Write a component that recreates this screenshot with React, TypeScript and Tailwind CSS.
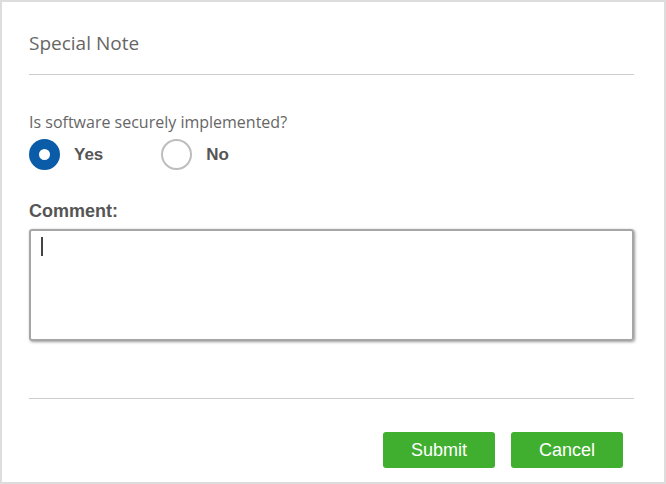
import React, { useState } from 'react';

function Radio({ checked, label, onClick }: { checked: boolean; label: string; onClick: () => void }) {
    return (
        <button type="button" onClick={onClick} className="flex items-center">
            {checked ? (
                <span className="block w-[31px] h-[31px] rounded-full border-[10px] border-[#0b5ca8] bg-white" />
            ) : (
                <span className="block w-[31px] h-[31px] rounded-full border-2 border-[#bdbdbd] bg-white" />
            )}
            <span className="ml-[14px] font-['Liberation_Sans',Arial,sans-serif] font-bold text-[17px] leading-5 text-[#555]">
                {label}
            </span>
        </button>
    );
}

export default function App() {
    const [secure, setSecure] = useState(true);

    return (
        <div className="w-[666px] h-[484px] bg-white border-2 border-[#dddddd] pl-[27px] pr-[30px] font-['Open_Sans',sans-serif]">
            {/* Header */}
            <div className="pt-[29px] pb-[19px] border-b border-[#cccccc]">
                <h2 className="text-[19px] leading-6 text-[#666]">Special Note</h2>
            </div>

            <p className="mt-[37px] text-[16px] leading-5 text-[#666]">Is software securely implemented?</p>
            <div className="mt-[7px] flex gap-[58px]">
                <Radio checked={secure} label="Yes" onClick={() => setSecure(true)} />
                <Radio checked={!secure} label="No" onClick={() => setSecure(false)} />
            </div>

            <label className="block mt-[31px] font-['Liberation_Sans',Arial,sans-serif] font-bold text-[18px] leading-5 text-[#555]">
                Comment:
            </label>
            <div className="mt-[8px] h-[112px] rounded-[3px] border-2 border-[#a6a6a6] shadow-[1px_1px_3px_rgba(0,0,0,0.4)] px-[10px] pt-[6px]">
                <span className="block w-[2px] h-[19px] bg-[#444]" />
            </div>

            {/* Footer */}
            <div className="mt-[57px] border-t border-[#cccccc] pt-[33px] flex justify-end gap-4 pr-[11px]">
                <button className="w-[112px] h-[36px] rounded-[3px] bg-[#40af30] text-white text-[18px] font-['Liberation_Sans',Arial,sans-serif]">
                    Submit
                </button>
                <button className="w-[112px] h-[36px] rounded-[3px] bg-[#40af30] text-white text-[18px] font-['Liberation_Sans',Arial,sans-serif]">
                    Cancel
                </button>
            </div>
        </div>
    );
}
